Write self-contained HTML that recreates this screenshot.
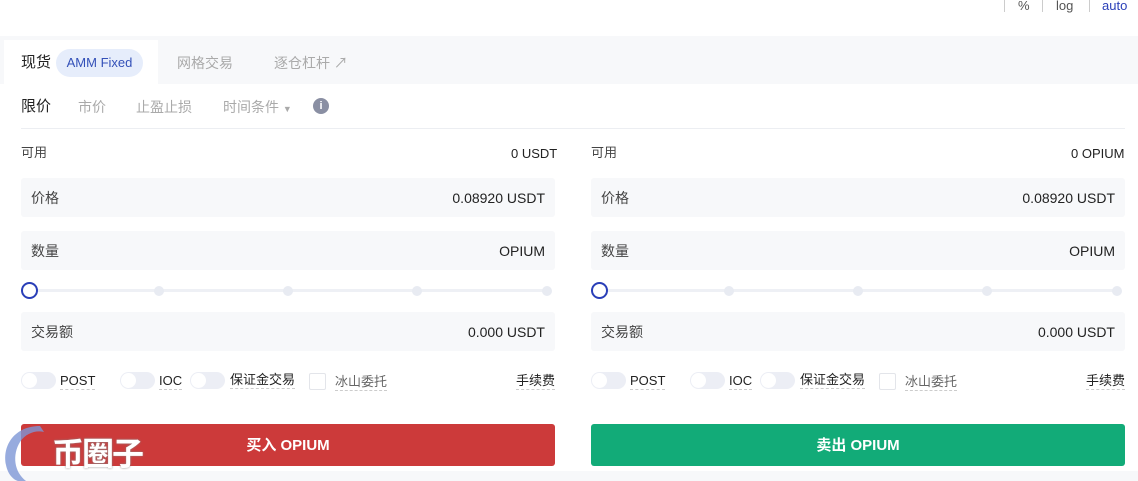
<!DOCTYPE html><html><head><meta charset="utf-8"><style>
*{margin:0;padding:0;box-sizing:border-box}
body{width:1138px;height:481px;position:relative;background:#fff;font-family:"Liberation Sans","Noto Sans CJK SC",sans-serif;color:#222;overflow:hidden;line-height:16px}
.a{position:absolute;white-space:nowrap}
.inp{position:absolute;height:39px;background:#f7f8fa;border-radius:3px;font-size:14px;display:flex;align-items:center;justify-content:space-between;padding:0 10px}
.inp .l{color:#444}
.tg{position:absolute;width:35px;height:17px;border-radius:9px;background:#eceef5}
.tg:after{content:"";position:absolute;left:1px;top:1px;width:15px;height:15px;border-radius:50%;background:#fff}
.u{border-bottom:1px dashed #ccc;font-size:13px;line-height:16px}
.dot{position:absolute;width:10px;height:10px;border-radius:50%;background:#e8ebf2;top:286px}
.track{position:absolute;height:3px;background:#eef0f5;top:289px}
.btn{position:absolute;top:424px;width:534px;height:42px;border-radius:3px;color:#fff;font-weight:bold;font-size:15px;display:flex;align-items:center;justify-content:center;padding-top:2px}
</style></head><body>
<div class="a" style="left:1004px;top:0;width:1px;height:12px;background:#ccc"></div>
<div class="a" style="left:1018px;top:-2px;font-size:13px;color:#555">%</div>
<div class="a" style="left:1042px;top:0;width:1px;height:12px;background:#ccc"></div>
<div class="a" style="left:1056px;top:-2px;font-size:13px;color:#555">log</div>
<div class="a" style="left:1089px;top:0;width:1px;height:12px;background:#ccc"></div>
<div class="a" style="left:1102px;top:-2px;font-size:13px;color:#2a3fb8">auto</div>
<div class="a" style="left:0;top:36px;width:1138px;height:48px;background:#f7f8fa"></div>
<div class="a" style="left:4px;top:40px;width:154px;height:44px;background:#fff"></div>
<div class="a" style="left:21px;top:54px;font-size:15px;line-height:18px">现货</div>
<div class="a" style="left:56px;top:49px;width:87px;height:28px;border-radius:14px;background:#e6edfb;color:#3350b8;font-size:13px;line-height:28px;text-align:center">AMM Fixed</div>
<div class="a" style="left:177px;top:55px;font-size:14px;color:#aaa">网格交易</div>
<div class="a" style="left:274px;top:55px;font-size:14px;color:#aaa">逐仓杠杆 ↗</div>
<div class="a" style="left:21px;top:98px;font-size:15px;line-height:18px">限价</div>
<div class="a" style="left:78px;top:99px;font-size:14px;color:#aaa">市价</div>
<div class="a" style="left:136px;top:99px;font-size:14px;color:#aaa">止盈止损</div>
<div class="a" style="left:223px;top:99px;font-size:14px;color:#aaa">时间条件 <span style="font-size:9px">▼</span></div>
<div class="a" style="left:313px;top:98px;width:16px;height:16px;border-radius:50%;background:#8a8fa3;color:#fff;font-size:11px;font-weight:bold;text-align:center;line-height:16px">i</div>
<div class="a" style="left:21px;top:128px;width:1104px;height:1px;background:#eceef2"></div>

<!-- left -->
<div class="a" style="left:21px;top:145px;font-size:13px;color:#444">可用</div>
<div class="a" style="left:511px;top:146px;font-size:13px">0 USDT</div>
<div class="inp" style="left:21px;top:178px;width:534px"><span class="l">价格</span><span>0.08920 USDT</span></div>
<div class="inp" style="left:21px;top:231px;width:534px"><span class="l">数量</span><span>OPIUM</span></div>
<div class="track" style="left:30px;width:520px"></div>
<div class="dot" style="left:154px"></div><div class="dot" style="left:283px"></div><div class="dot" style="left:412px"></div><div class="dot" style="left:542px"></div>
<div class="a" style="left:21px;top:282px;width:17px;height:17px;border-radius:50%;border:2.5px solid #2a3fb8;background:#fff"></div>
<div class="inp" style="left:21px;top:312px;width:534px"><span class="l">交易额</span><span>0.000 USDT</span></div>
<div class="tg" style="left:21px;top:372px"></div><div class="a u" style="left:60px;top:373px">POST</div>
<div class="tg" style="left:120px;top:372px"></div><div class="a u" style="left:159px;top:373px">IOC</div>
<div class="tg" style="left:190px;top:372px"></div><div class="a u" style="left:230px;top:372px">保证金交易</div>
<div class="a" style="left:309px;top:373px;width:17px;height:17px;border:1px solid #e3e5ea;border-radius:2px"></div>
<div class="a u" style="left:335px;top:374px;color:#666">冰山委托</div>
<div class="a u" style="left:516px;top:373px">手续费</div>
<div class="btn" style="left:21px;background:#cc3a3a">买入 OPIUM</div>

<!-- right -->
<div class="a" style="left:591px;top:145px;font-size:13px;color:#444">可用</div>
<div class="a" style="left:1071px;top:146px;font-size:13px">0 OPIUM</div>
<div class="inp" style="left:591px;top:178px;width:534px"><span class="l">价格</span><span>0.08920 USDT</span></div>
<div class="inp" style="left:591px;top:231px;width:534px"><span class="l">数量</span><span>OPIUM</span></div>
<div class="track" style="left:600px;width:520px"></div>
<div class="dot" style="left:724px"></div><div class="dot" style="left:853px"></div><div class="dot" style="left:982px"></div><div class="dot" style="left:1112px"></div>
<div class="a" style="left:591px;top:282px;width:17px;height:17px;border-radius:50%;border:2.5px solid #2a3fb8;background:#fff"></div>
<div class="inp" style="left:591px;top:312px;width:534px"><span class="l">交易额</span><span>0.000 USDT</span></div>
<div class="tg" style="left:591px;top:372px"></div><div class="a u" style="left:630px;top:373px">POST</div>
<div class="tg" style="left:690px;top:372px"></div><div class="a u" style="left:729px;top:373px">IOC</div>
<div class="tg" style="left:760px;top:372px"></div><div class="a u" style="left:800px;top:372px">保证金交易</div>
<div class="a" style="left:879px;top:373px;width:17px;height:17px;border:1px solid #e3e5ea;border-radius:2px"></div>
<div class="a u" style="left:905px;top:374px;color:#666">冰山委托</div>
<div class="a u" style="left:1086px;top:373px">手续费</div>
<div class="btn" style="left:591px;background:#12ab78">卖出 OPIUM</div>
<div class="a" style="left:0;top:471px;width:1138px;height:10px;background:#f7f8fa"></div>

<!-- watermark -->
<svg class="a" style="left:0;top:420px" width="60" height="61"><path d="M40 6 C15 6 2 25 6 45 C8 55 14 60 18 61 L26 61 C14 52 12 35 20 22 C26 13 36 10 44 12 Z" fill="#7d96d6" opacity="0.8"/></svg>
<div class="a" style="left:52px;top:434px;font-size:32px;line-height:40px;font-weight:bold;color:#fff;letter-spacing:-2px;text-shadow:0 0 2px #888">币圈子</div>
</body></html>
